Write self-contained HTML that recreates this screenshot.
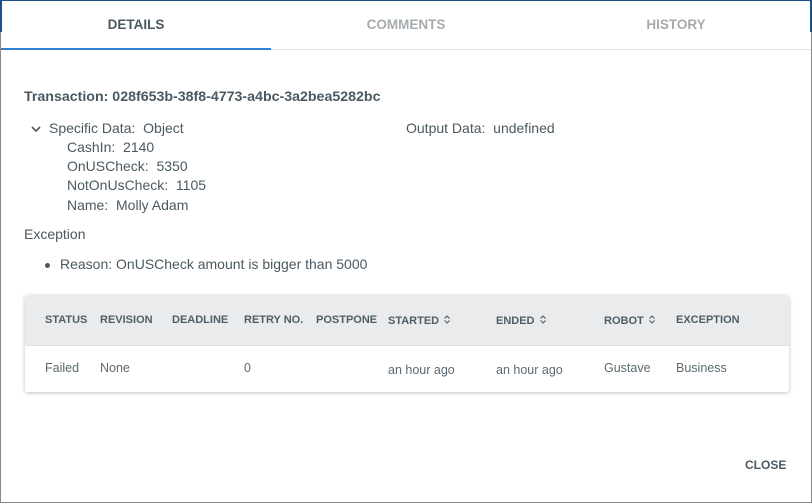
<!DOCTYPE html>
<html><head><style>
*{margin:0;padding:0;box-sizing:border-box}
body{width:812px;height:503px;background:#fff;font-family:"Liberation Sans",Arial,sans-serif;color:#4a5961;position:relative;overflow:hidden}
.frame{position:absolute;left:0;top:0;width:812px;height:503px;border:1px solid #8a8a8a;border-top:1px solid #1d4f86}
.sb{position:absolute;top:0;width:2px;height:32px;background:#1d4f86}
.tab{position:absolute;top:17px;font-size:13.5px;font-weight:bold;text-align:center;width:270px;color:#a5acb0}
.t{position:absolute;font-size:14px;white-space:nowrap}
.card{position:absolute;left:25px;top:295px;width:764px;height:97px;border-radius:3px;box-shadow:0 1px 4px rgba(0,0,0,.25);overflow:hidden}
.hd{height:51px;background:#e9ebed;border-bottom:1px solid #dfe2e4;position:relative}
.h{position:absolute;top:19px;font-size:11px;font-weight:bold;color:#4f5e66;white-space:nowrap}
.c{position:absolute;font-size:12.5px;color:#5b6a72;white-space:nowrap}
.h svg{margin-left:4px;vertical-align:-1px}
</style></head><body>
<div class="frame"></div>
<div class="sb" style="left:0"></div><div class="sb" style="right:0"></div>
<div class="tab" style="left:1px;color:#4a5961">DETAILS</div>
<div class="tab" style="left:271px">COMMENTS</div>
<div class="tab" style="left:541px">HISTORY</div>
<div style="position:absolute;left:1px;top:49px;width:810px;height:1px;background:#e2e2e2"></div>
<div style="position:absolute;left:1px;top:48px;width:270px;height:2px;background:#2f7fd3"></div>
<div class="t" style="left:24px;top:89px;font-weight:bold;font-size:14.2px">Transaction: 028f653b-38f8-4773-a4bc-3a2bea5282bc</div>
<svg style="position:absolute;left:30px;top:124px" width="12" height="10"><path d="M2 3l4 4 4-4" stroke="#4a5961" stroke-width="1.6" fill="none"/></svg>
<div class="t" style="left:49px;top:120px">Specific Data:&nbsp; Object</div>
<div class="t" style="left:67px;top:139px">CashIn:&nbsp; 2140</div>
<div class="t" style="left:67px;top:158px">OnUSCheck:&nbsp; 5350</div>
<div class="t" style="left:67px;top:177px">NotOnUsCheck:&nbsp; 1105</div>
<div class="t" style="left:67px;top:197px">Name:&nbsp; Molly Adam</div>
<div class="t" style="left:406px;top:120px">Output Data:&nbsp; undefined</div>
<div class="t" style="left:24px;top:226px">Exception</div>
<div style="position:absolute;left:45px;top:263px;width:5px;height:5px;border-radius:50%;background:#4a5961"></div>
<div class="t" style="left:60px;top:256px">Reason: OnUSCheck amount is bigger than 5000</div>
<div class="card">
<div class="hd">
<div class="h" style="left:20px">STATUS</div>
<div class="h" style="left:75px">REVISION</div>
<div class="h" style="left:147px">DEADLINE</div>
<div class="h" style="left:219px">RETRY NO.</div>
<div class="h" style="left:291px">POSTPONE</div>
<div class="h" style="left:363px">STARTED<svg width="8" height="11"><path d="M1.5 4.5L4 2l2.5 2.5M1.5 6.5L4 9l2.5-2.5" stroke="#4f5e66" stroke-width="1.1" fill="none"/></svg></div>
<div class="h" style="left:471px">ENDED<svg width="8" height="11"><path d="M1.5 4.5L4 2l2.5 2.5M1.5 6.5L4 9l2.5-2.5" stroke="#4f5e66" stroke-width="1.1" fill="none"/></svg></div>
<div class="h" style="left:579px">ROBOT<svg width="8" height="11"><path d="M1.5 4.5L4 2l2.5 2.5M1.5 6.5L4 9l2.5-2.5" stroke="#4f5e66" stroke-width="1.1" fill="none"/></svg></div>
<div class="h" style="left:651px">EXCEPTION</div>
</div>
<div class="c" style="left:20px;top:66px">Failed</div>
<div class="c" style="left:75px;top:66px">None</div>
<div class="c" style="left:219px;top:66px">0</div>
<div class="c" style="left:363px;top:68px">an hour ago</div>
<div class="c" style="left:471px;top:68px">an hour ago</div>
<div class="c" style="left:579px;top:66px">Gustave</div>
<div class="c" style="left:651px;top:66px">Business</div>
</div>
<div class="t" style="left:745px;top:458px;font-size:12px;font-weight:bold">CLOSE</div>
</body></html>
